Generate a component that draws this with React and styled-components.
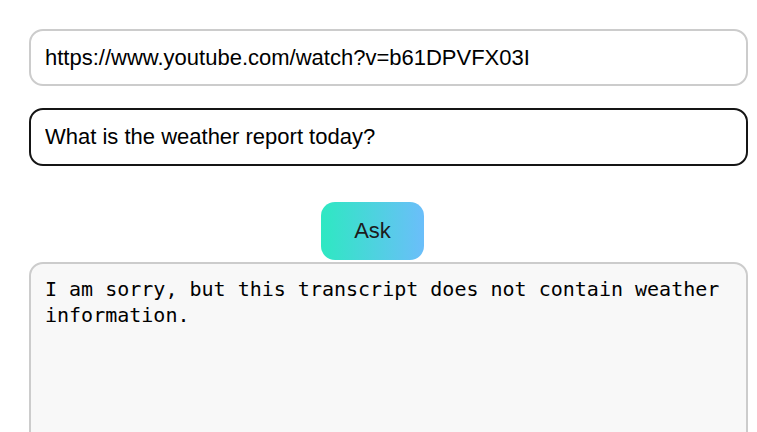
import { useEffect, useRef } from "react";
import styled, { createGlobalStyle } from "styled-components";

const GlobalStyle = createGlobalStyle`
  body {
    margin: 0;
    background: #fff;
    font-family: "Liberation Sans", Arial, sans-serif;
    overflow: hidden;
  }
`;

const Page = styled.div`
  display: flex;
  flex-direction: column;
  width: 719px;
  padding: 29px 0 0 29px;
`;

const Field = styled.input`
  box-sizing: border-box;
  width: 100%;
  height: ${(p) => p.h || "57px"};
  margin-bottom: ${(p) => p.mb || "0"};
  padding: 0 14px;
  border: 2px solid ${(p) => (p.active ? "#151515" : "#cccccc")};
  border-radius: 14px;
  background: #fff;
  color: #000;
  font-family: "Liberation Sans", Arial, sans-serif;
  font-size: 22px;
  outline: none;
`;

const ButtonRow = styled.div`
  display: flex;
  padding: 36px 0 0 292px;
`;

const AskButton = styled.button`
  width: 103px;
  height: 58px;
  border: none;
  border-radius: 14px;
  background: linear-gradient(90deg, #2ee8c2 0%, #6bbefa 100%);
  color: #1c1c1c;
  font-family: "Liberation Sans", Arial, sans-serif;
  font-size: 22px;
  cursor: pointer;
`;

const Answer = styled.textarea`
  box-sizing: border-box;
  width: 100%;
  height: 220px;
  margin-top: 2px;
  padding: 12px 14px;
  border: 2px solid #cccccc;
  border-radius: 14px;
  background: #f8f8f8;
  color: #000;
  font-family: "DejaVu Sans Mono", monospace;
  font-size: 20px;
  line-height: 26px;
  resize: none;
  outline: none;
`;

export default function App() {
  const questionRef = useRef(null);

  useEffect(() => {
    const el = questionRef.current;
    if (el) {
      el.focus();
      el.setSelectionRange(el.value.length, el.value.length);
    }
  }, []);

  return (
    <>
      <GlobalStyle />
      <Page>
        <Field
          mb="22px"
          h="57px"
          defaultValue="https://www.youtube.com/watch?v=b61DPVFX03I"
        />
        <Field
          ref={questionRef}
          active
          h="58px"
          defaultValue="What is the weather report today?"
        />
        <ButtonRow>
          <AskButton>Ask</AskButton>
        </ButtonRow>
        <Answer
          readOnly
          value="I am sorry, but this transcript does not contain weather information."
        />
      </Page>
    </>
  );
}
